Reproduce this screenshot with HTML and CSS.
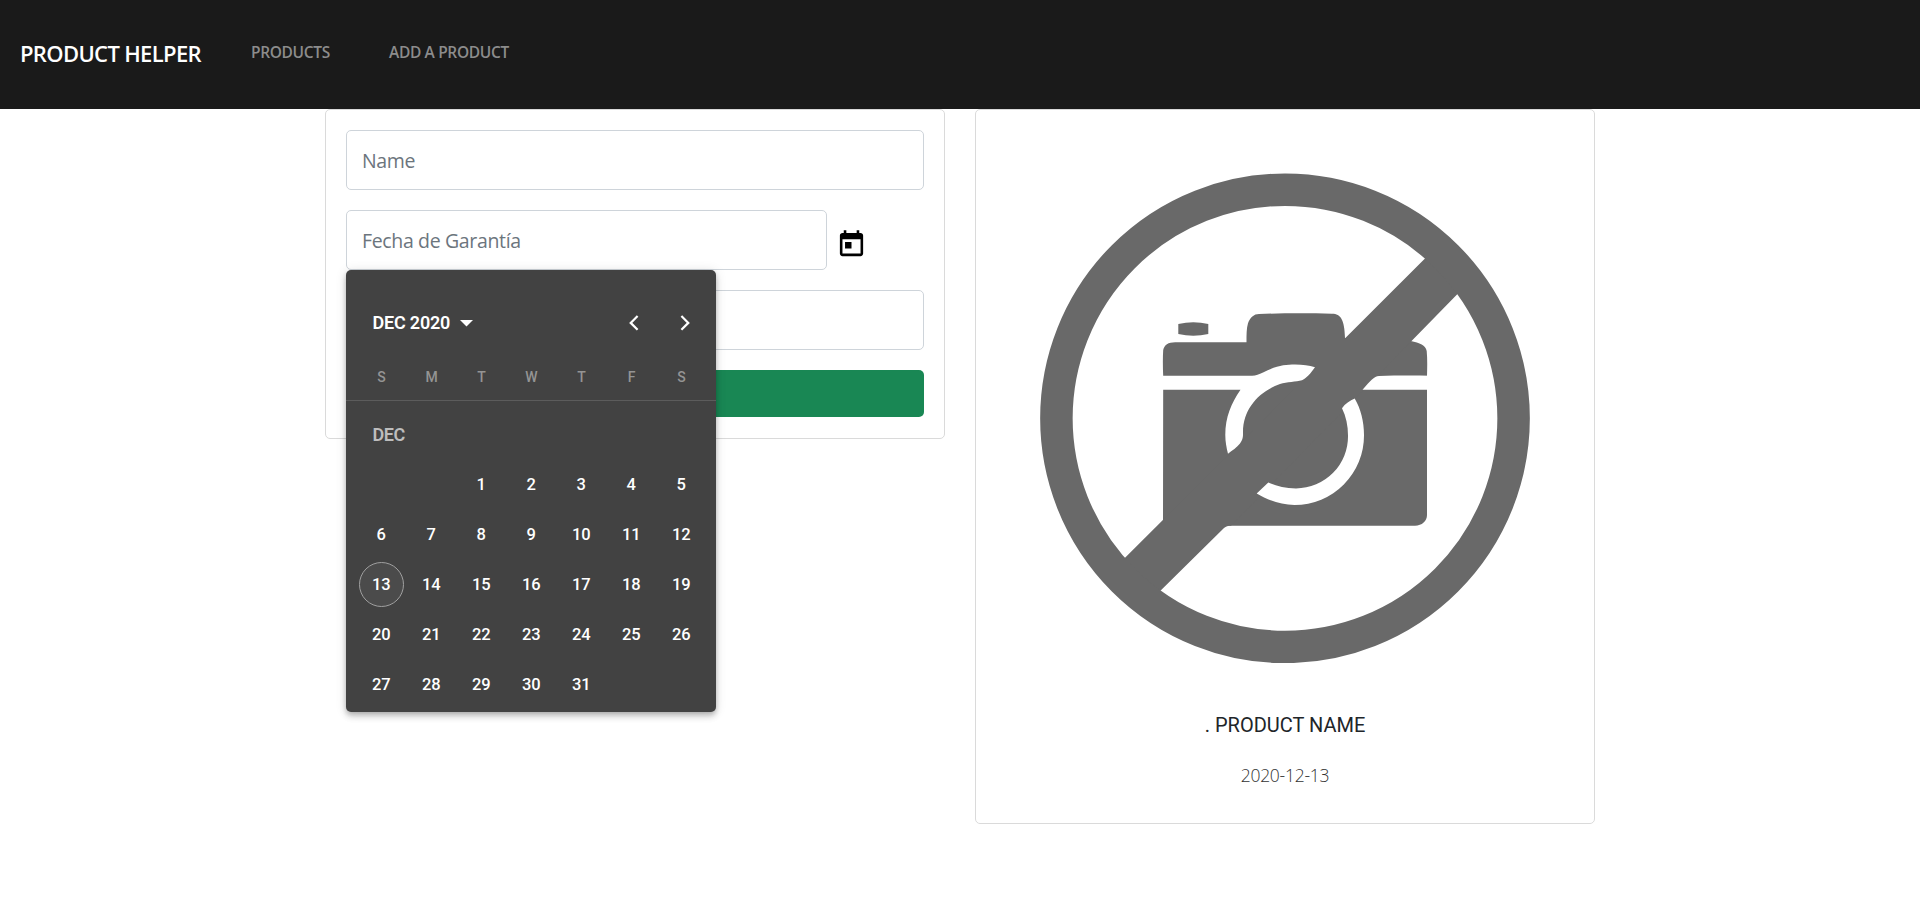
FILE: index.html
```html
<!DOCTYPE html>
<html lang="en">
<head>
<meta charset="utf-8">
<title>Product Helper</title>
<link rel="stylesheet" href="styles.css">
</head>
<body>
<nav class="navbar">
  <a class="brand">PRODUCT HELPER</a>
  <a class="nav-link nav-products">PRODUCTS</a>
  <a class="nav-link nav-add">ADD A PRODUCT</a>
</nav>
<main class="container">
  <form class="card form-card">
    <input class="field" type="text" placeholder="Name">
    <div class="date-row">
      <input class="field" type="text" placeholder="Fecha de Garantía">
      <svg class="today-icon" viewBox="0 0 24 24"><path d="M19 3h-1V1h-2v2H8V1H6v2H5c-1.11 0-1.99.9-1.99 2L3 19c0 1.1.89 2 2 2h14c1.1 0 2-.9 2-2V5c0-1.1-.9-2-2-2zm0 16H5V8h14v11zM7 10h5v5H7z"/></svg>
      <div class="calendar">
        <div class="cal-header">
          <span class="period">DEC 2020</span>
          <svg class="caret" viewBox="0 0 13 6.5"><path d="M0 0h13L6.500 6.500z"/></svg>
          <svg class="chevron prev" viewBox="0 0 10 16"><path d="M8.600 1L1.700 7.900l6.900 6.900"/></svg>
          <svg class="chevron" viewBox="0 0 10 16"><path d="M1.400 1l6.900 6.900-6.900 6.900"/></svg>
        </div>
        <div class="grid weekdays"><span>S</span><span>M</span><span>T</span><span>W</span><span>T</span><span>F</span><span>S</span></div>
        <div class="month">DEC</div>
        <div class="grid days">
          <span></span><span></span><span>1</span><span>2</span><span>3</span><span>4</span><span>5</span>
          <span>6</span><span>7</span><span>8</span><span>9</span><span>10</span><span>11</span><span>12</span>
          <span class="today">13</span><span>14</span><span>15</span><span>16</span><span>17</span><span>18</span><span>19</span>
          <span>20</span><span>21</span><span>22</span><span>23</span><span>24</span><span>25</span><span>26</span>
          <span>27</span><span>28</span><span>29</span><span>30</span><span>31</span>
        </div>
      </div>
    </div>
    <input class="field" type="text">
    <button class="submit" type="button"></button>
  </form>
  <section class="card preview">
    <svg class="no-image" viewBox="1040 173 490 490">
      <g class="ink">
        <path d="M1178.300 324q15-3.400 30 0v10q-15 3.400-30 0z"/>
        <path d="M1163.200 376c-.4-9-.5-18 0-26 1-5 5-7.700 12-7.700h71.300c0-8 0-14 1.500-19 2-6 6-9.400 11-9.400 25-.7 50-.7 73-.2 9 0 12.500 6.300 13 24.300l65.700 3c9 2 15 4 16 10 .8 9 .5 17 .3 25v139c0 6-5 10.700-12 10.700h-191l-61-4.700z"/>
        <path d="M1437 246.500L1113 569.800 1148 603l76-75c2-1.700 4-2.300 7-2.300L1468 283.200z"/>
      </g>
      <circle class="ring" cx="1285" cy="418.300" r="228.600"/>
      <g class="gap">
        <path d="M1160 375.700h92c4 0 7-1.200 11-3.200 14-7 22-7.900 32-7.900 8 0 14 1 20 2.700-4 5.500-8 10.800-13 13-6 1.700-15 1.500-22 3.700-20 7-37 24-37 48 .3 6-1 8.500-3 11.500-3 4-8 7-12 10.200-1.500-6-2.700-12-2.700-18.700 0-18 6-32 15.200-45.300H1160z"/>
        <path d="M1256.700 493.500l11.600-11C1276 486 1285 488.400 1296 488.400a52 52 0 0 0 52-52.900c0-10-2-19-6-27.200 3-4.500 8-8 12.700-9.800 6 10 9.300 23 9.300 36.500a69.500 69.500 0 0 1-69.500 70c-14 0-27-5-37.800-11.500z"/>
        <path d="M1430 375.700c-17-.3-35-.2-51 .2-5 .3-9 5-16.500 13.800H1430z"/>
      </g>
    </svg>
    <h2 class="product-name">. PRODUCT NAME</h2>
    <p class="product-date">2020-12-13</p>
  </section>
</main>
</body>
</html>
```
FILE: styles.css
```css
* { box-sizing: border-box; }
body { margin: 0; background: #fff; font-family: "Open Sans", "Noto Sans", sans-serif; }
.navbar { display: flex; align-items: center; height: 109px; padding: 0 20px 4px; background: #1a1a1a; white-space: nowrap; }
.brand { width: 231px; color: #fff; font-size: 22px; font-weight: 600; letter-spacing: -0.65px; }
.nav-link { padding-bottom: 1px; color: #8c8c8c; font-size: 15.5px; font-weight: 600; letter-spacing: -0.35px; }
.nav-products { width: 138px; }
.container { display: flex; align-items: flex-start; gap: 30px; width: 1270px; margin: 0 auto; }
.card { width: 620px; border: 1px solid #dadada; border-radius: 5px; background: #fff; }
.form-card { display: flex; flex-direction: column; gap: 20px; height: 330px; padding: 20px; }
.field { display: block; width: 100%; height: 60px; padding: 0 15px; border: 1px solid #ced4da; border-radius: 5px; background: #fff; color: #212529; font-family: "Open Sans", "Noto Sans", sans-serif; font-size: 19.5px; letter-spacing: -0.35px; }
.field::placeholder { color: #6c757d; opacity: 1; }
.date-row { position: relative; display: flex; align-items: flex-start; }
.date-row .field { width: 481px; }
.today-icon { width: 31px; height: 31px; margin: 18.5px 0 0 9px; }
.submit { height: 47px; border: 0; border-radius: 5px; background: #198754; }
.calendar { position: absolute; z-index: 2; top: 60px; left: 0; width: 370px; height: 442px; padding: 27px 10px 0; border-radius: 5px; background: #424242; box-shadow: 0 2px 5px -1px rgba(0,0,0,.2), 0 5px 6px rgba(0,0,0,.14), 0 1px 12px rgba(0,0,0,.12); color: #fff; font-family: Roboto, sans-serif; }
.cal-header { display: flex; align-items: center; height: 50px; padding: 0 16px 0 16.5px; font-size: 18px; font-weight: 600; letter-spacing: -0.2px; }
.caret { width: 13px; height: 6.5px; margin: 3px 0 0 10px; fill: #fff; }
.chevron { width: 10px; height: 16px; margin-top: 1px; fill: none; stroke: #fff; stroke-width: 2.2; }
.prev { margin: 1px 41px 0 auto; }
.grid { display: grid; grid-template-columns: repeat(7, 50px); text-align: center; }
.weekdays { height: 54px; margin: 0 -10px; padding: 0 9.5px 0 10.5px; border-bottom: 1px solid #5c5c5c; color: #949494; font-size: 14px; font-weight: 500; line-height: 60px; }
.month { height: 58px; padding-left: 16.5px; color: #bdbdbd; font-size: 18px; font-weight: 600; letter-spacing: -0.4px; line-height: 68px; }
.days { grid-auto-rows: 50px; align-items: center; padding-left: 0.3px; font-size: 16.5px; font-weight: 500; }
.today { display: grid; place-items: center; justify-self: center; width: 45px; height: 45px; border: 1px solid #a0a0a0; border-radius: 50%; background: #4b4b4b; }
.preview { display: flex; flex-direction: column; align-items: center; height: 715px; padding-top: 63px; }
.no-image { display: block; width: 490px; height: 490px; }
.ink { fill: #696969; }
.ring { fill: none; stroke: #696969; stroke-width: 32.5; }
.gap { fill: #fff; }
.product-name { margin: 48.5px 0 0; color: #212529; font: 400 20px/26px Roboto, sans-serif; }
.product-date { margin: 25.5px 0 0; color: #333; font-size: 17.5px; font-weight: 350; line-height: 24px; letter-spacing: -0.25px; }
```
